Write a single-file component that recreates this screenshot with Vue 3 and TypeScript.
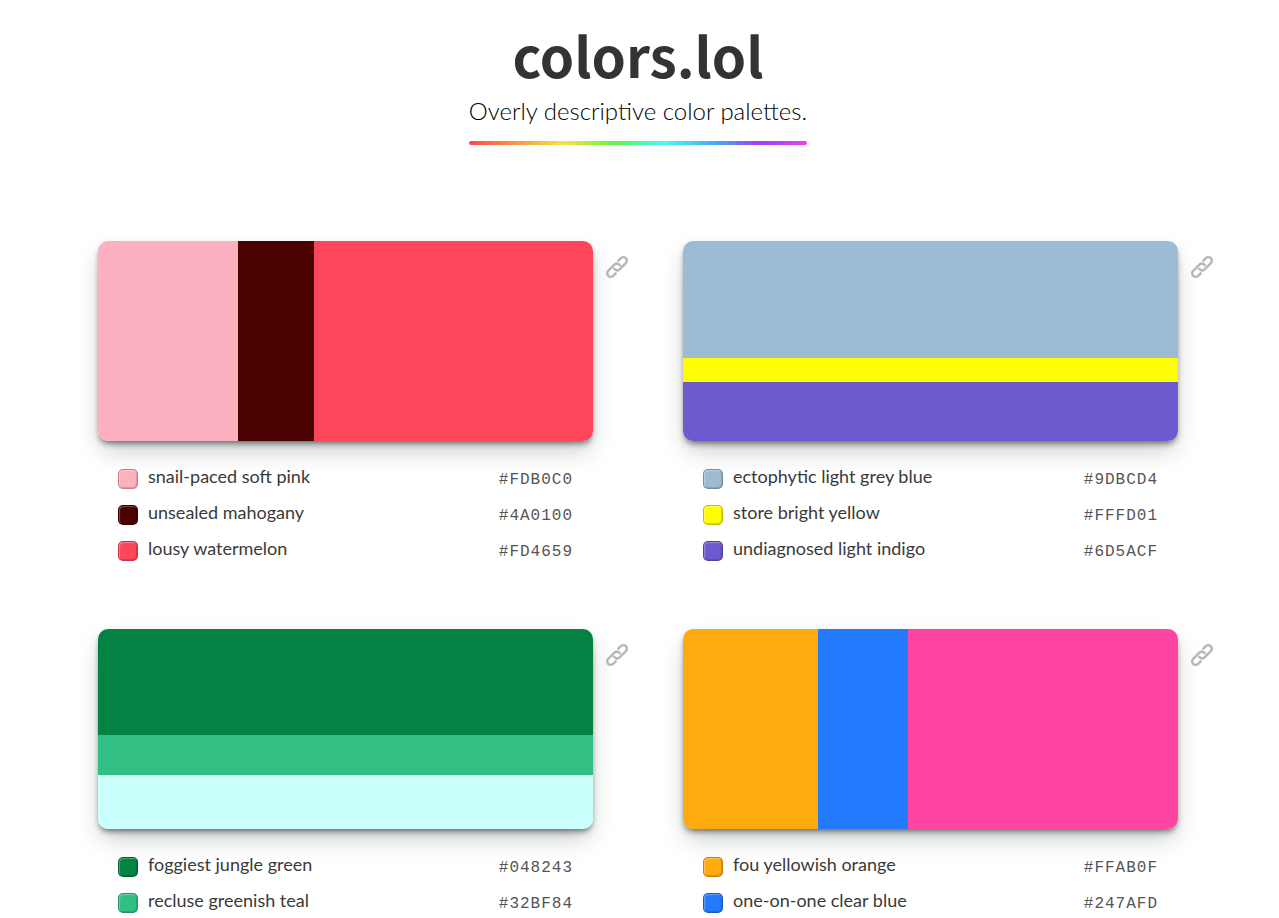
<script setup lang="ts">
interface Color {
  hex: string
  share: number
  name?: string
}

interface Palette {
  id: string
  direction: 'row' | 'column'
  colors: Color[]
}

const palettes: Palette[] = [
  {
    id: 'soft-pink',
    direction: 'row',
    colors: [
      { hex: '#FDB0C0', share: 140, name: 'snail-paced soft pink' },
      { hex: '#4A0100', share: 76, name: 'unsealed mahogany' },
      { hex: '#FD4659', share: 279, name: 'lousy watermelon' },
    ],
  },
  {
    id: 'grey-blue',
    direction: 'column',
    colors: [
      { hex: '#9DBCD4', share: 117, name: 'ectophytic light grey blue' },
      { hex: '#FFFD01', share: 24, name: 'store bright yellow' },
      { hex: '#6D5ACF', share: 59, name: 'undiagnosed light indigo' },
    ],
  },
  {
    id: 'jungle-green',
    direction: 'column',
    colors: [
      { hex: '#048243', share: 106, name: 'foggiest jungle green' },
      { hex: '#32BF84', share: 40, name: 'recluse greenish teal' },
      { hex: '#CAFFFB', share: 54 },
    ],
  },
  {
    id: 'yellowish-orange',
    direction: 'row',
    colors: [
      { hex: '#FFAB0F', share: 135, name: 'fou yellowish orange' },
      { hex: '#247AFD', share: 90, name: 'one-on-one clear blue' },
      { hex: '#FF45A4', share: 270 },
    ],
  },
]

const named = (palette: Palette): Color[] => palette.colors.filter((c) => c.name)
</script>

<template>
  <div class="page">
    <header class="masthead">
      <h1>colors.lol</h1>
      <p class="tagline">Overly descriptive color palettes.</p>
    </header>
    <main class="grid">
      <article v-for="palette in palettes" :key="palette.id" class="palette">
        <div class="content">
          <div class="card" :style="{ flexDirection: palette.direction }">
            <div
              v-for="color in palette.colors"
              :key="color.hex"
              class="band"
              :style="{ flexGrow: color.share, backgroundColor: color.hex }"
            ></div>
          </div>
          <ul class="names">
            <li v-for="color in named(palette)" :key="color.hex">
              <span class="chip" :style="{ backgroundColor: color.hex }"></span>
              <span class="name">{{ color.name }}</span>
              <code>{{ color.hex }}</code>
            </li>
          </ul>
        </div>
        <a class="permalink" :href="'#' + palette.id" aria-label="Link to palette">
          <svg viewBox="-12 -12 24 24" width="24" height="24" aria-hidden="true">
            <g transform="rotate(-45)" fill="none" stroke="currentColor" stroke-width="2.5">
              <path d="M-4.4 3.5H-9a3.5 3.5 0 0 1 0-7H-.2A3.5 3.5 0 0 1 2.8 1.8" />
              <path d="M4.4-3.5H9a3.5 3.5 0 0 1 0 7H.2A3.5 3.5 0 0 1-2.8-1.8" />
            </g>
          </svg>
        </a>
      </article>
    </main>
  </div>
</template>

<style>
body {
  margin: 0;
  background: #fff;
}
</style>

<style scoped>
.page {
  padding: 22px 51px 0 48px;
  color: #3a3a3a;
  font-family: Lato, "Liberation Sans", sans-serif;
}

.masthead {
  display: flex;
  flex-direction: column;
  align-items: center;
}

h1 {
  margin: 0;
  color: #333;
  font-family: "Noto Sans CJK JP", Lato, sans-serif;
  font-size: 55px;
  font-weight: 700;
  line-height: 64px;
}

.tagline {
  margin: 0;
  padding-top: 5px;
  color: #000;
  font-size: 24px;
  font-weight: 300;
  line-height: 40px;
}

.tagline::after {
  content: "";
  display: block;
  height: 4px;
  margin-top: 10px;
  border-radius: 2px;
  background: linear-gradient(90deg, #fa4b4b, #fbe045 28%, #5ff545 43%, #4bf5fa 58%, #4ba5fa 73%, #a040f0 86%, #f03ef0);
}

.grid {
  display: grid;
  grid-template-columns: repeat(2, minmax(0, 531px));
  justify-content: center;
  gap: 60px 54px;
  padding: 96px 0 0 36px;
}

.palette {
  display: flex;
  gap: 12px;
}

.content {
  flex: 1;
  min-width: 0;
}

.card {
  display: flex;
  height: 200px;
  overflow: hidden;
  border-radius: 10px;
  box-shadow: 0 12px 24px -4px rgba(20, 30, 30, 0.25), 0 4px 6px -2px rgba(0, 20, 20, 0.6);
}

.band {
  flex-basis: 0;
}

.names {
  margin: 0;
  padding: 20px 20px 0;
  list-style: none;
}

.names li {
  display: flex;
  align-items: center;
  height: 36px;
}

.chip {
  box-sizing: border-box;
  width: 20px;
  height: 20px;
  margin: 0 10px 0 0;
  border: 1px solid rgba(0, 0, 0, 0.25);
  border-radius: 5px;
  box-shadow: inset 1px 1px 1px rgba(255, 255, 255, 0.3), inset -1px -1px 1px rgba(0, 0, 0, 0.15);
}

.name {
  flex: 1;
  padding-bottom: 6px;
  font-size: 18px;
  line-height: 24px;
}

code {
  padding-top: 2px;
  color: #555;
  font-family: "Liberation Mono", monospace;
  font-size: 16px;
  letter-spacing: 1px;
}

.permalink {
  height: 24px;
  margin-top: 14px;
  color: #b8b8b8;
}

.permalink svg {
  display: block;
}
</style>
